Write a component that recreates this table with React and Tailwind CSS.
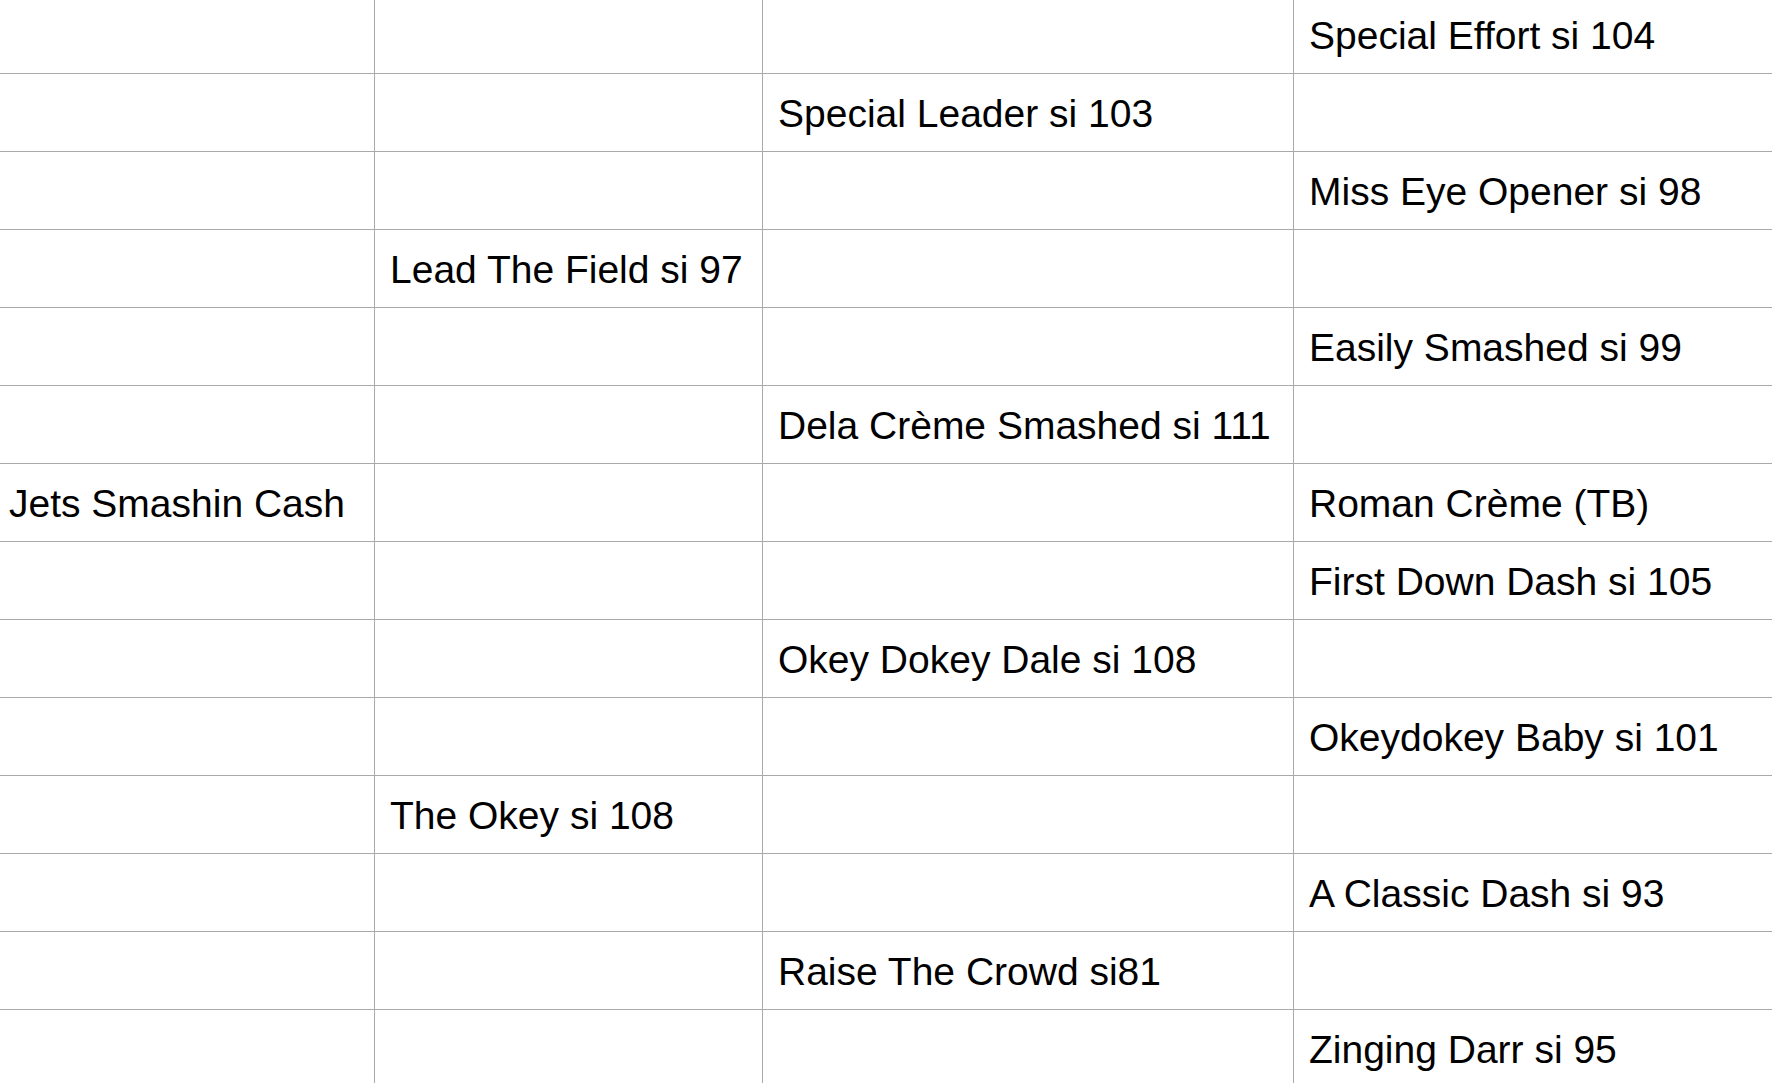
const rows = [
    ['', '', '', 'Special Effort si 104'],
    ['', '', 'Special Leader si 103', ''],
    ['', '', '', 'Miss Eye Opener si 98'],
    ['', 'Lead The Field si 97', '', ''],
    ['', '', '', 'Easily Smashed si 99'],
    ['', '', 'Dela Crème Smashed si 111', ''],
    ['Jets Smashin Cash', '', '', 'Roman Crème (TB)'],
    ['', '', '', 'First Down Dash si 105'],
    ['', '', 'Okey Dokey Dale si 108', ''],
    ['', '', '', 'Okeydokey Baby si 101'],
    ['', 'The Okey si 108', '', ''],
    ['', '', '', 'A Classic Dash si 93'],
    ['', '', 'Raise The Crowd si81', ''],
    ['', '', '', 'Zinging Darr si 95'],
]

export default function App() {
    return (
        <div className="w-[1772px] h-[1083px] overflow-hidden bg-white text-black" style={{ fontFamily: '"Liberation Sans", Arial, sans-serif' }}>
            {/* Pedigree grid */}
            <div className="-mt-[4px]">
                {rows.map((r, i) => (
                    <div key={i} className="grid grid-cols-[375px_388px_531px_1fr] h-[78px] border-b border-[#a9a9a9]">
                        <div className="border-r border-[#a9a9a9] flex items-center pl-[9px] pt-[1px] text-[39px] leading-none whitespace-nowrap">{r[0]}</div>
                        <div className="border-r border-[#a9a9a9] flex items-center pl-[15px] pt-[1px] text-[39px] leading-none whitespace-nowrap">{r[1]}</div>
                        <div className="border-r border-[#a9a9a9] flex items-center pl-[15px] pt-[1px] text-[39px] leading-none whitespace-nowrap">{r[2]}</div>
                        <div className="flex items-center pl-[15px] pt-[1px] text-[39px] leading-none whitespace-nowrap">{r[3]}</div>
                    </div>
                ))}
            </div>
        </div>
    )
}
